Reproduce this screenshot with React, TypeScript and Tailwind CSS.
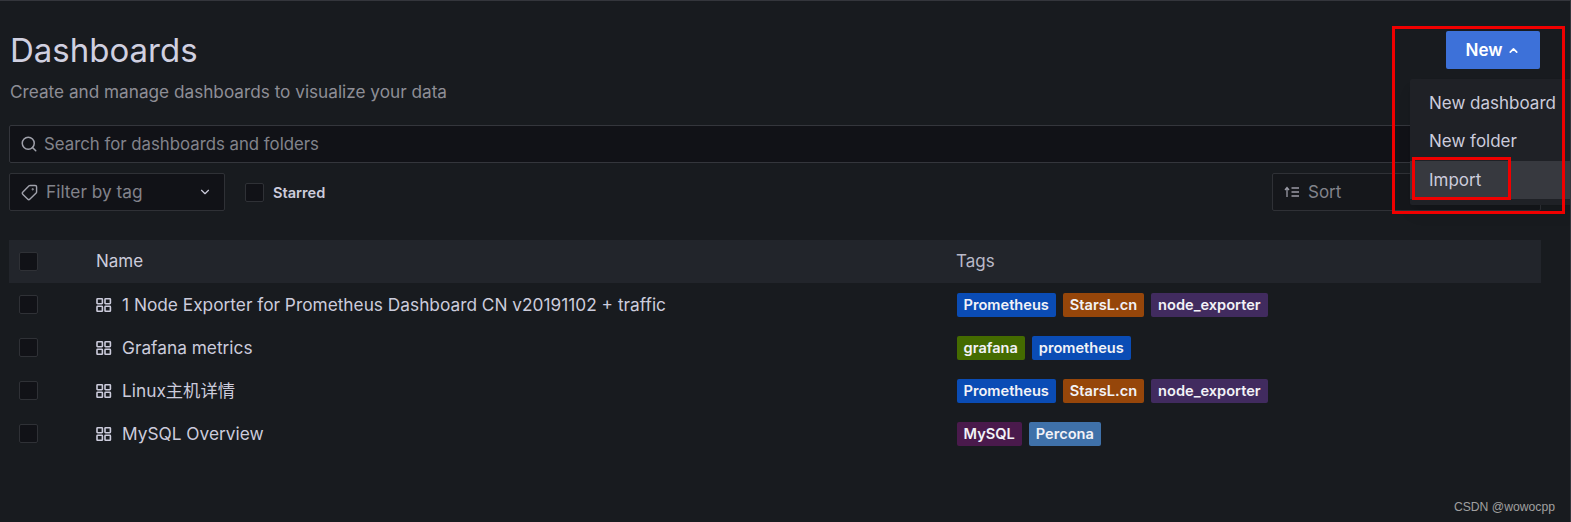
import { Search, ChevronDown, ChevronUp, Tag } from "lucide-react";

const blue = "bg-[#0a4cb5]";
const orange = "bg-[#96460a]";
const purple = "bg-[#412b5f]";

const rows = [
  {
    name: "1 Node Exporter for Prometheus Dashboard CN v20191102 + traffic",
    tags: [
      { label: "Prometheus", color: blue },
      { label: "StarsL.cn", color: orange },
      { label: "node_exporter", color: purple },
    ],
  },
  {
    name: "Grafana metrics",
    tags: [
      { label: "grafana", color: "bg-[#446b00]" },
      { label: "prometheus", color: blue },
    ],
  },
  {
    name: "Linux主机详情",
    tags: [
      { label: "Prometheus", color: blue },
      { label: "StarsL.cn", color: orange },
      { label: "node_exporter", color: purple },
    ],
  },
  {
    name: "MySQL Overview",
    tags: [
      { label: "MySQL", color: "bg-[#4a1a4c]" },
      { label: "Percona", color: "bg-[#3f71a9]" },
    ],
  },
];

function Checkbox() {
  return <div className="w-[19px] h-[19px] shrink-0 rounded-[2px] border border-[#2f3136] bg-[#111217]" />;
}

function GridIcon() {
  return (
    <svg width="16" height="16" viewBox="0 0 16 16" fill="none" stroke="#ccccdc" strokeWidth="1.6" className="shrink-0">
      <rect x="1" y="1.7" width="5.4" height="5" rx="0.6" />
      <rect x="9" y="1.7" width="5.4" height="5" rx="0.6" />
      <rect x="1" y="9.3" width="5.4" height="5" rx="0.6" />
      <rect x="9" y="9.3" width="5.4" height="5" rx="0.6" />
    </svg>
  );
}

function SortIcon() {
  return (
    <svg width="16" height="14" viewBox="0 0 16 14" fill="none" stroke="#9a9ba6" strokeWidth="1.3">
      <path d="M3 12V3M1 5l2-2.5L5 5" />
      <path d="M7.5 3H15M7.5 7H15M7.5 11H15" />
    </svg>
  );
}

export default function App() {
  return (
    <div className="relative w-[1571px] h-[522px] overflow-hidden bg-[#181b1f] text-[#ccccdc] border-t border-r border-[#34363c] font-['Inter','Noto_Sans_CJK_SC',sans-serif]">
      <div className="pl-[9px] pr-[29px] pt-[28px]">
        {/* Header */}
        <div className="flex justify-between items-start h-[96px]">
          <div>
            <h1 className="text-[33px] leading-[40px] mt-[1px] ml-[1px] text-[#d0d0e0]">Dashboards</h1>
            <p className="text-[17.2px] leading-6 mt-[10px] ml-[1px] text-[#8e8e96]">Create and manage dashboards to visualize your data</p>
          </div>
          <button className="flex items-center justify-center gap-[5px] w-[94px] h-[38px] mt-[2px] mr-[1px] pt-[1px] rounded-[2px] bg-[#3d71d9] text-white text-[17px] font-semibold">
            New
            <ChevronUp size={13} strokeWidth={3} />
          </button>
        </div>

        {/* Search */}
        <div className="flex items-center h-[38px] rounded-[2px] border border-[#34363c] bg-[#111217] pl-[10px] gap-[6px] text-[#82838b]">
          <Search size={18} className="text-[#a0a1ab]" />
          <span className="text-[16.8px] mt-[1px]">Search for dashboards and folders</span>
        </div>

        {/* Filters */}
        <div className="flex items-center mt-[10px] h-[38px]">
          <div className="flex items-center w-[216px] h-full rounded-[2px] border border-[#2f3136] bg-[#111217] pl-[11px] pr-[12px] text-[#82838b]">
            <Tag size={17} className="text-[#a0a1ab] -scale-x-100" />
            <span className="text-[17.3px] ml-[8px] flex-1">Filter by tag</span>
            <ChevronDown size={14} strokeWidth={2} className="text-[#ccccdc]" />
          </div>
          <div className="ml-[20px]">
            <Checkbox />
          </div>
          <span className="ml-[9px] mt-[3px] text-[14.6px] font-semibold text-[#ccccdc]">Starred</span>
          <div className="flex items-center ml-auto w-[269px] h-full rounded-[2px] border border-[#2f3136] bg-[#15171b] pl-[11px] gap-[8px] text-[#82838b]">
            <SortIcon />
            <span className="text-[17px] mt-[1px]">Sort</span>
          </div>
        </div>

        {/* Table */}
        <div className="mt-[29px]">
          <div className="flex items-center h-[43px] bg-[#22252b] pl-[10px] text-[17px]">
            <Checkbox />
            <div className="w-[58px] shrink-0" />
            <span className="w-[860px]">Name</span>
            <span className="text-[#b9b9c8]">Tags</span>
          </div>
          {rows.map((row) => (
            <div key={row.name} className="flex items-center h-[43px] pl-[10px]">
              <Checkbox />
              <div className="w-[58px] shrink-0" />
              <div className="flex items-center gap-[9px] w-[860px] text-[17.3px]">
                <GridIcon />
                <span className="ml-[1px]">{row.name}</span>
              </div>
              <div className="flex gap-[7px] ml-[0.6px]">
                {row.tags.map((tag) => (
                  <span key={tag.label} className={`${tag.color} h-[24px] px-[7px] rounded-[2px] text-[14.6px] font-semibold leading-[24px] text-[#f2f2f7]`}>
                    {tag.label}
                  </span>
                ))}
              </div>
            </div>
          ))}
        </div>
      </div>

      {/* New menu */}
      <div className="absolute left-[1410px] top-[78px] w-[170px] h-[126px] pt-[5px] rounded-[2px] bg-[#1f2126] text-[17px] text-[#ccccdc] shadow-lg">
        <div className="h-[38px] leading-[38px] pl-[19px]">New dashboard</div>
        <div className="h-[39px] leading-[38px] pl-[19px]">New folder</div>
        <div className="h-[38px] leading-[38px] pl-[19px] bg-[#37393f]">Import</div>
      </div>

      {/* Red annotations */}
      <div className="absolute left-[1392px] top-[25px] w-[173px] h-[188px] border-[3px] border-[#f00000]" />
      <div className="absolute left-[1412px] top-[156px] w-[99px] h-[43px] border-[3px] border-[#f00000]" />

      <span className="absolute right-[15px] top-[497px] text-[12.2px] text-[#a0a0a0] font-['Liberation_Sans',sans-serif]">CSDN @wowocpp</span>
    </div>
  );
}
